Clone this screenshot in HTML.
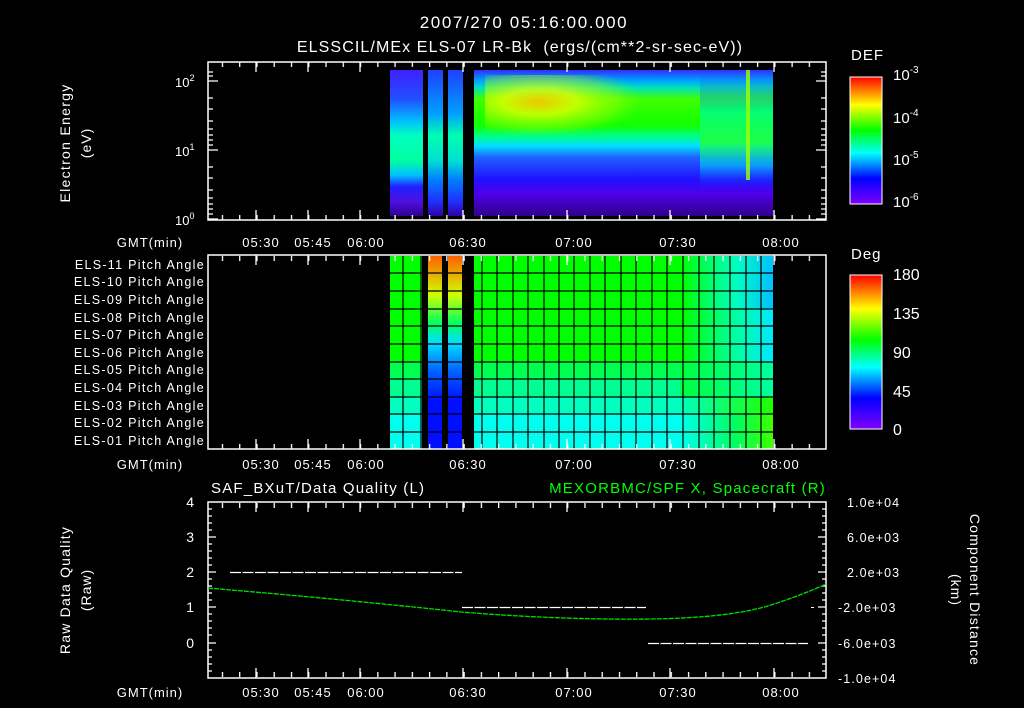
<!DOCTYPE html>
<html><head><meta charset="utf-8"><style>
html,body{margin:0;padding:0;background:#000;width:1024px;height:708px;overflow:hidden}
svg text{font-family:"Liberation Sans",sans-serif;fill:#fff;white-space:pre}
</style></head><body>
<svg width="1024" height="708" viewBox="0 0 1024 708" xmlns="http://www.w3.org/2000/svg">
<defs>
<pattern id="tk" x="221.8" y="0" width="17.263" height="708" patternUnits="userSpaceOnUse">
<rect x="0" y="0" width="1.3" height="708" fill="#fff"/></pattern>
<linearGradient id="gA" x1="0" y1="0" x2="0" y2="1">
<stop offset="0" stop-color="#4020ff"/><stop offset="0.2" stop-color="#2050ff"/><stop offset="0.35" stop-color="#00c0ff"/>
<stop offset="0.45" stop-color="#00ffc0"/><stop offset="0.62" stop-color="#00ffa0"/><stop offset="0.72" stop-color="#00c0ff"/>
<stop offset="0.8" stop-color="#2020ff"/><stop offset="0.9" stop-color="#5010e0"/><stop offset="1" stop-color="#300090"/></linearGradient>
<linearGradient id="gB" x1="0" y1="0" x2="0" y2="1">
<stop offset="0" stop-color="#2040ff"/><stop offset="0.3" stop-color="#00a0ff"/><stop offset="0.45" stop-color="#00ffb0"/>
<stop offset="0.62" stop-color="#00e0d0"/><stop offset="0.75" stop-color="#0080ff"/><stop offset="0.9" stop-color="#2030ff"/><stop offset="1" stop-color="#3000a0"/></linearGradient>
<linearGradient id="gD" x1="0" y1="0" x2="0" y2="1">
<stop offset="0" stop-color="#3030ff"/><stop offset="0.07" stop-color="#00a0ff"/><stop offset="0.12" stop-color="#00e0c0"/>
<stop offset="0.2" stop-color="#40ff00"/><stop offset="0.38" stop-color="#10ff00"/><stop offset="0.45" stop-color="#00ff80"/>
<stop offset="0.52" stop-color="#00e0ff"/><stop offset="0.6" stop-color="#2060ff"/><stop offset="0.75" stop-color="#2010ff"/>
<stop offset="0.85" stop-color="#5000e8"/><stop offset="1" stop-color="#30008a"/></linearGradient>
<linearGradient id="gR" x1="0" y1="0" x2="0" y2="1">
<stop offset="0" stop-color="#3030ff" stop-opacity="0"/><stop offset="0.35" stop-color="#00ff80" stop-opacity="0.9"/>
<stop offset="0.6" stop-color="#20ff40" stop-opacity="0.9"/><stop offset="0.8" stop-color="#00c0ff" stop-opacity="0.7"/><stop offset="1" stop-color="#2010ff" stop-opacity="0"/></linearGradient>
<radialGradient id="gY" cx="0.3" cy="0.45" r="0.6">
<stop offset="0" stop-color="#ffc000" stop-opacity="0.9"/><stop offset="0.35" stop-color="#f0ff00" stop-opacity="0.75"/><stop offset="0.75" stop-color="#a0ff00" stop-opacity="0.4"/><stop offset="1" stop-color="#40ff00" stop-opacity="0"/></radialGradient>
<linearGradient id="cb" x1="0" y1="0" x2="0" y2="1">
<stop offset="0" stop-color="#ff0000"/><stop offset="0.22" stop-color="#ffff00"/><stop offset="0.42" stop-color="#00ff00"/>
<stop offset="0.6" stop-color="#00ffff"/><stop offset="0.8" stop-color="#0000ff"/><stop offset="1" stop-color="#8000ff"/></linearGradient>
<linearGradient id="st" x1="0" y1="0" x2="0" y2="1">
<stop offset="0" stop-color="#ff6000"/><stop offset="0.2" stop-color="#d0ff00"/><stop offset="0.35" stop-color="#00ff60"/>
<stop offset="0.45" stop-color="#00e0ff"/><stop offset="0.6" stop-color="#0060ff"/><stop offset="0.75" stop-color="#0010ff"/><stop offset="1" stop-color="#0010ff"/></linearGradient>
</defs>

<!-- titles -->
<text x="524" y="28" font-size="17" text-anchor="middle" letter-spacing="1.6">2007/270 05:16:00.000</text>
<text x="520" y="52" font-size="16" text-anchor="middle" letter-spacing="1.1">ELSSCIL/MEx ELS-07 LR-Bk  (ergs/(cm**2-sr-sec-eV))</text>

<!-- PANEL 1 -->
<rect x="390" y="70" width="33" height="146" fill="url(#gA)"/>
<rect x="428" y="70" width="15" height="146" fill="url(#gB)"/>
<rect x="448" y="70" width="15" height="146" fill="url(#gB)"/>
<rect x="474" y="70" width="299" height="146" fill="url(#gD)"/>
<rect x="485" y="75" width="180" height="60" fill="url(#gY)"/>
<rect x="700" y="70" width="73" height="120" fill="url(#gR)"/>
<rect x="746" y="70" width="4" height="110" fill="#a0ff00" opacity="0.8"/>
<rect x="208" y="62" width="618" height="158" fill="none" stroke="#fff" stroke-width="1.5"/>
<rect x="209" y="62" width="616" height="5" fill="url(#tk)"/>
<rect x="209" y="215" width="616" height="5" fill="url(#tk)"/>
<g stroke="#fff" stroke-width="1.3">
<path d="M256 62v10M308 62v10M360 62v10M463 62v10M567 62v10M670 62v10M774 62v10M256 220v-10M308 220v-10M360 220v-10M463 220v-10M567 220v-10M670 220v-10M774 220v-10"/>
<path d="M208 81h10M208 150h10M208 219h10M826 81h-10M826 150h-10M826 219h-10"/>
<path d="M208 98h5M208 109h5M208 121h5M208 129h5M208 135h5M208 140h5M208 145h5M208 167h5M208 178h5M208 190h5M208 198h5M208 204h5M208 209h5M208 214h5M208 72h5M208 76h5M826 98h-5M826 109h-5M826 121h-5M826 129h-5M826 135h-5M826 140h-5M826 145h-5M826 167h-5M826 178h-5M826 190h-5M826 198h-5M826 204h-5M826 209h-5M826 214h-5M826 72h-5M826 76h-5"/>
</g>
<text x="175" y="87" font-size="13">10<tspan font-size="9" dy="-6">2</tspan></text>
<text x="175" y="156" font-size="13">10<tspan font-size="9" dy="-6">1</tspan></text>
<text x="175" y="225" font-size="13">10<tspan font-size="9" dy="-6">0</tspan></text>
<text transform="translate(70,143) rotate(-90)" font-size="14" text-anchor="middle" letter-spacing="1.3">Electron Energy</text>
<text transform="translate(91,143) rotate(-90)" font-size="14" text-anchor="middle" letter-spacing="1">(eV)</text>
<g font-size="13" text-anchor="middle" letter-spacing="1">
<text x="150" y="247">GMT(min)</text>
<text x="261" y="247">05:30</text><text x="313" y="247">05:45</text><text x="366" y="247">06:00</text>
<text x="468" y="247">06:30</text><text x="574" y="247">07:00</text><text x="678" y="247">07:30</text><text x="781" y="247">08:00</text>
</g>
<!-- colorbar 1 -->
<text x="851" y="60" font-size="15" letter-spacing="1">DEF</text>
<rect x="850" y="77" width="32" height="127" fill="url(#cb)" stroke="#fff" stroke-width="1"/>
<g font-size="15"><text x="893" y="80">10<tspan font-size="10" dy="-7">-3</tspan></text>
<text x="893" y="123">10<tspan font-size="10" dy="-7">-4</tspan></text>
<text x="893" y="165">10<tspan font-size="10" dy="-7">-5</tspan></text>
<text x="893" y="207">10<tspan font-size="10" dy="-7">-6</tspan></text></g>

<!-- PANEL 2 -->
<g>
<rect x="390" y="256" width="383" height="105" fill="#00ff00"/>
<rect x="390" y="361" width="383" height="18" fill="#00ff50"/>
<rect x="390" y="379" width="383" height="18" fill="#00ff90"/>
<rect x="390" y="397" width="383" height="17" fill="#00ffc0"/>
<rect x="390" y="414" width="383" height="35" fill="#00ffee"/>
</g>
<defs>
<linearGradient id="r1" x1="0" x2="1"><stop offset="0" stop-color="#00ff00"/><stop offset="0.6" stop-color="#00ffc0"/><stop offset="1" stop-color="#00c0ff"/></linearGradient>
<linearGradient id="r2" x1="0" x2="1"><stop offset="0" stop-color="#00ff00"/><stop offset="0.6" stop-color="#00ffa0"/><stop offset="1" stop-color="#00e8ff"/></linearGradient>
<linearGradient id="r3" x1="0" x2="1"><stop offset="0" stop-color="#00ff40"/><stop offset="1" stop-color="#00ffa0"/></linearGradient>
<linearGradient id="r4" x1="0" x2="1"><stop offset="0" stop-color="#00ffc0"/><stop offset="1" stop-color="#20ff00"/></linearGradient>
<linearGradient id="r5" x1="0" x2="1"><stop offset="0" stop-color="#00ffee"/><stop offset="0.6" stop-color="#00ff60"/><stop offset="1" stop-color="#40ff00"/></linearGradient>
</defs>
<rect x="680" y="256" width="93" height="52" fill="url(#r1)"/>
<rect x="680" y="308" width="93" height="53" fill="url(#r2)"/>
<rect x="680" y="361" width="93" height="36" fill="url(#r3)"/>
<rect x="680" y="397" width="93" height="17" fill="url(#r4)"/>
<rect x="680" y="414" width="93" height="35" fill="url(#r5)"/>
<rect x="422" y="256" width="6" height="193" fill="#000"/>
<rect x="428" y="256" width="14" height="193" fill="url(#st)"/>
<rect x="442" y="256" width="6" height="193" fill="#000"/>
<rect x="448" y="256" width="14" height="193" fill="url(#st)"/>
<rect x="462" y="256" width="12" height="193" fill="#000"/>
<g stroke="#000" stroke-width="1.2">
<path d="M390 273h383M390 291h383M390 309h383M390 326h383M390 344h383M390 362h383M390 379h383M390 397h383M390 414h383M390 432h383"/>
<path d="M403 256v193M421 256v193M482 256v193M497 256v193M513 256v193M528 256v193M544 256v193M559 256v193M574 256v193M590 256v193M605 256v193M621 256v193M636 256v193M652 256v193M667 256v193M683 256v193M699 256v193M714 256v193M730 256v193M746 256v193M761 256v193"/>
</g>
<rect x="208" y="255" width="618" height="194" fill="none" stroke="#fff" stroke-width="1.5"/>
<rect x="209" y="256" width="616" height="5" fill="url(#tk)"/>
<rect x="209" y="444" width="616" height="5" fill="url(#tk)"/>
<g stroke="#fff" stroke-width="1.3">
<path d="M256 255v10M308 255v10M360 255v10M463 255v10M567 255v10M670 255v10M774 255v10M256 449v-10M308 449v-10M360 449v-10M463 449v-10M567 449v-10M670 449v-10M774 449v-10"/>
</g>
<g font-size="12.5" text-anchor="end" letter-spacing="1.3">
<text x="205" y="269">ELS-11 Pitch Angle</text><text x="205" y="286">ELS-10 Pitch Angle</text>
<text x="205" y="304">ELS-09 Pitch Angle</text><text x="205" y="322">ELS-08 Pitch Angle</text>
<text x="205" y="339">ELS-07 Pitch Angle</text><text x="205" y="357">ELS-06 Pitch Angle</text>
<text x="205" y="374">ELS-05 Pitch Angle</text><text x="205" y="392">ELS-04 Pitch Angle</text>
<text x="205" y="410">ELS-03 Pitch Angle</text><text x="205" y="427">ELS-02 Pitch Angle</text>
<text x="205" y="445">ELS-01 Pitch Angle</text></g>
<g font-size="13" text-anchor="middle" letter-spacing="1">
<text x="150" y="469">GMT(min)</text>
<text x="261" y="469">05:30</text><text x="313" y="469">05:45</text><text x="366" y="469">06:00</text>
<text x="468" y="469">06:30</text><text x="574" y="469">07:00</text><text x="678" y="469">07:30</text><text x="781" y="469">08:00</text>
</g>
<text x="851" y="259" font-size="15" letter-spacing="1">Deg</text>
<rect x="850" y="275" width="32" height="154" fill="url(#cb)" stroke="#fff" stroke-width="1"/>
<g font-size="16"><text x="893" y="280">180</text><text x="893" y="319">135</text><text x="893" y="358">90</text><text x="893" y="397">45</text><text x="893" y="435">0</text></g>

<!-- PANEL 3 -->
<text x="211" y="493" font-size="15" letter-spacing="1.2">SAF_BXuT/Data Quality (L)</text>
<text x="826" y="493" font-size="15" text-anchor="end" letter-spacing="1.2" style="fill:#00ff00">MEXORBMC/SPF X, Spacecraft (R)</text>
<rect x="208" y="502" width="618" height="176" fill="none" stroke="#fff" stroke-width="1.5"/>
<rect x="209" y="503" width="616" height="5" fill="url(#tk)"/>
<rect x="209" y="672" width="616" height="5" fill="url(#tk)"/>
<g stroke="#fff" stroke-width="1.3">
<path d="M256 502v10M308 502v10M360 502v10M463 502v10M567 502v10M670 502v10M774 502v10M256 678v-10M308 678v-10M360 678v-10M463 678v-10M567 678v-10M670 678v-10M774 678v-10"/>
<path d="M208 537h8M208 572h8M208 607h8M208 643h8M826 537h-8M826 572h-8M826 607h-8M826 643h-8"/>
<path d="M208 509h4M208 516h4M208 523h4M208 530h4M208 544h4M208 551h4M208 558h4M208 565h4M208 579h4M208 586h4M208 593h4M208 600h4M208 614h4M208 621h4M208 628h4M208 635h4M208 650h4M208 657h4M208 664h4M208 671h4M826 509h-4M826 516h-4M826 523h-4M826 530h-4M826 544h-4M826 551h-4M826 558h-4M826 565h-4M826 579h-4M826 586h-4M826 593h-4M826 600h-4M826 614h-4M826 621h-4M826 628h-4M826 635h-4M826 650h-4M826 657h-4M826 664h-4M826 671h-4"/>
</g>
<g stroke="#fff" stroke-width="1.2" stroke-dasharray="11,1.5">
<path d="M230 572.5H462M462 607.5H646M648 643.5H808"/></g>
<rect x="811" y="607" width="3" height="1" fill="#fff"/>
<path d="M208 588 Q 350 600 461 612 Q 560 620 649 619 Q 730 618 771 605 Q 805 594 826 584" fill="none" stroke="#00e000" stroke-width="1.3" stroke-dasharray="5,1"/>
<g font-size="14" text-anchor="end">
<text x="194" y="507">4</text><text x="194" y="542">3</text><text x="194" y="577">2</text><text x="194" y="612">1</text><text x="194" y="648">0</text></g>
<g font-size="12.5" letter-spacing="1.1">
<text x="847" y="507">1.0e+04</text><text x="847" y="542">6.0e+03</text><text x="847" y="577">2.0e+03</text>
<text x="838" y="612">-2.0e+03</text><text x="838" y="648">-6.0e+03</text><text x="838" y="683">-1.0e+04</text></g>
<text transform="translate(70,590) rotate(-90)" font-size="14" text-anchor="middle" letter-spacing="1.2">Raw Data Quality</text>
<text transform="translate(91,590) rotate(-90)" font-size="14" text-anchor="middle" letter-spacing="1">(Raw)</text>
<text transform="translate(970,590) rotate(90)" font-size="14" text-anchor="middle" letter-spacing="1.2">Component Distance</text>
<text transform="translate(951,590) rotate(90)" font-size="14" text-anchor="middle" letter-spacing="1">(km)</text>
<g font-size="13" text-anchor="middle" letter-spacing="1">
<text x="150" y="697">GMT(min)</text>
<text x="261" y="697">05:30</text><text x="313" y="697">05:45</text><text x="366" y="697">06:00</text>
<text x="468" y="697">06:30</text><text x="574" y="697">07:00</text><text x="678" y="697">07:30</text><text x="781" y="697">08:00</text>
</g>
</svg>
</body></html>
